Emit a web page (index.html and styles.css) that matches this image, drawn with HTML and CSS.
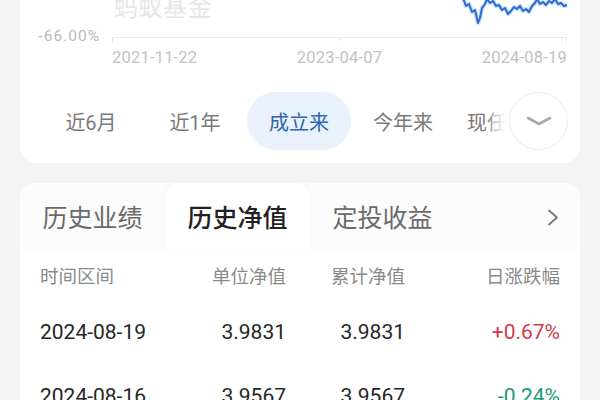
FILE: index.html
```html
<!DOCTYPE html>
<html lang="zh-CN">
<head>
<meta charset="utf-8">
<link rel="stylesheet" href="styles.css">
</head>
<body>
<div class="page">
  <section class="card chart-card">
    <div class="chart">
      <div class="ylabel">-66.00%</div>
      <div class="plot">
        <span class="watermark">蚂蚁基金</span>
        <svg class="plot-svg" width="455" height="45" viewBox="0 0 455 45">
          <line x1="0" y1="37.5" x2="455" y2="37.5" stroke="#e9e9e9" stroke-width="1.2"/>
          <line x1="0.6" y1="37.5" x2="0.6" y2="43" stroke="#e6e6e6" stroke-width="1.2"/>
          <line x1="228" y1="37.5" x2="228" y2="41" stroke="#eaeaea" stroke-width="1.2"/>
          <line x1="454.4" y1="37.5" x2="454.4" y2="43" stroke="#e6e6e6" stroke-width="1.2"/>
          <polyline fill="none" stroke="#a9c9f2" stroke-width="4.5" stroke-linejoin="round" opacity="0.6"
            points="351,-2 354,6 357,4 360,12 363,10 366,23 368,18 370,8 373,4 375,-1 378,3 381,1 384,6 387,5 390,10 393,8 396,14 399,11 402,7 405,9 408,6 411,11 414,9 417,12 420,6 423,3 425,-1 428,4 431,2 434,5 437,1 440,3 443,-1 446,4 449,3 452,6 455,5"/>
          <polyline fill="none" stroke="#2a6bd3" stroke-width="2" stroke-linejoin="round"
            points="351,-2 354,6 357,4 360,12 363,10 366,23 368,18 370,8 373,4 375,-1 378,3 381,1 384,6 387,5 390,10 393,8 396,14 399,11 402,7 405,9 408,6 411,11 414,9 417,12 420,6 423,3 425,-1 428,4 431,2 434,5 437,1 440,3 443,-1 446,4 449,3 452,6 455,5"/>
        </svg>
      </div>
      <div class="dates">
        <span>2021-11-22</span>
        <span>2023-04-07</span>
        <span>2024-08-19</span>
      </div>
    </div>
    <div class="ranges">
      <span class="range">近6月</span>
      <span class="range">近1年</span>
      <span class="range active">成立来</span>
      <span class="range">今年来</span>
      <span class="range">现任以来</span>
      <div class="more-fade"></div>
      <div class="more-btn">
        <svg width="26" height="10" viewBox="0 0 26 10"><polyline points="2,2 13,8 24,2" fill="none" stroke="#a8a8a8" stroke-width="2.6" stroke-linecap="round" stroke-linejoin="round"/></svg>
      </div>
    </div>
  </section>

  <section class="card table-card">
    <div class="tabs">
      <span class="tab">历史业绩</span>
      <span class="tab active">历史净值</span>
      <span class="tab">定投收益</span>
      <span class="tab-arrow">
        <svg width="12" height="17" viewBox="0 0 12 17"><polyline points="2,1.5 10,8.5 2,15.5" fill="none" stroke="#777" stroke-width="1.8" stroke-linecap="round" stroke-linejoin="round"/></svg>
      </span>
    </div>
    <div class="row head">
      <span>时间区间</span>
      <span>单位净值</span>
      <span>累计净值</span>
      <span>日涨跌幅</span>
    </div>
    <div class="row">
      <span>2024-08-19</span>
      <span>3.9831</span>
      <span>3.9831</span>
      <span class="up">+0.67%</span>
    </div>
    <div class="row">
      <span>2024-08-16</span>
      <span>3.9567</span>
      <span>3.9567</span>
      <span class="down">-0.24%</span>
    </div>
  </section>
</div>
</body>
</html>
```

FILE: styles.css
```css
* { box-sizing: border-box; }
html, body {
  margin: 0;
  padding: 0;
  background: #f4f4f4;
  font-family: "Roboto", "Noto Sans CJK SC", sans-serif;
  overflow: hidden;
}
.page {
  width: 600px;
  height: 400px;
  padding: 0 20px;
  overflow: hidden;
}
.card {
  background: #fff;
}
.chart-card {
  border-radius: 0 0 16px 16px;
  height: 163px;
}
.chart {
  display: grid;
  grid-template-columns: 92px 455px;
  grid-template-rows: 45px 24px;
}
.ylabel {
  grid-column: 1;
  grid-row: 1;
  text-align: right;
  padding-right: 12px;
  padding-top: 26px;
  font-size: 15.5px;
  line-height: 20px;
  color: #b9b9b9;
  letter-spacing: 1px;
}
.plot {
  grid-column: 2;
  grid-row: 1;
  position: relative;
}
.plot-svg {
  display: block;
  overflow: visible;
}
.watermark {
  position: absolute;
  left: 2px;
  top: -9px;
  font-family: "Noto Sans CJK SC", sans-serif;
  font-size: 24px;
  line-height: 30px;
  color: #e6e6e6;
  letter-spacing: 0.5px;
}
.dates {
  grid-column: 2;
  grid-row: 2;
  display: flex;
  justify-content: space-between;
  align-items: center;
  font-size: 16.5px;
  color: #c2c2c2;
  letter-spacing: 0.2px;
}
.ranges {
  position: relative;
  display: flex;
  margin-top: 23px;
  padding-left: 19px;
  height: 58px;
  overflow: hidden;
  border-radius: 0 0 16px 16px;
}
.range {
  flex: 0 0 104px;
  display: flex;
  align-items: center;
  justify-content: center;
  font-size: 20px;
  color: #7a7a7a;
  border-radius: 29px;
  white-space: nowrap;
}
.range.active {
  background: #e8f1fc;
  color: #2e66b0;
}
.more-fade {
  position: absolute;
  right: 58px;
  top: 0;
  width: 36px;
  height: 58px;
  background: linear-gradient(to right, rgba(255,255,255,0) 0%, rgba(255,255,255,0.9) 45%, #fff 70%);
}
.more-btn {
  position: absolute;
  right: 12px;
  top: 0;
  width: 59px;
  height: 58px;
  border-radius: 50%;
  background: #fff;
  border: 1px solid #eeeeee;
  display: flex;
  align-items: center;
  justify-content: center;
}
.table-card {
  margin-top: 20px;
  border-radius: 16px 16px 0 0;
  overflow: hidden;
}
.tabs {
  display: flex;
  height: 67px;
  background: #fcfcfc;
  align-items: stretch;
}
.tab {
  flex: 0 0 145px;
  display: flex;
  align-items: center;
  justify-content: center;
  font-family: "Noto Sans CJK SC", sans-serif;
  font-size: 25px;
  color: #6a6a6a;
  padding-bottom: 1px;
}
.tab.active {
  background: #fff;
  color: #222;
  font-weight: 500;
  border-radius: 14px 14px 0 0;
  box-shadow: 0 -1px 6px rgba(0,0,0,0.04);
}
.tab-arrow {
  flex: 1;
  display: flex;
  align-items: center;
  justify-content: flex-end;
  padding-right: 21px;
  padding-top: 2px;
}
.tab-arrow svg { display: block; }
.row {
  display: grid;
  grid-template-columns: 130px 116px 119px 155px;
  margin: 0 20px;
  height: 64px;
  align-items: center;
  font-size: 21px;
  color: #262626;
}
.row span:not(:first-child) {
  text-align: right;
}
.row.head {
  height: 50px;
  font-size: 18.5px;
  color: #8a8a8a;
  font-family: "Noto Sans CJK SC", sans-serif;
}
.up { color: #d13b4d; }
.down { color: #1b9a74; }
```
